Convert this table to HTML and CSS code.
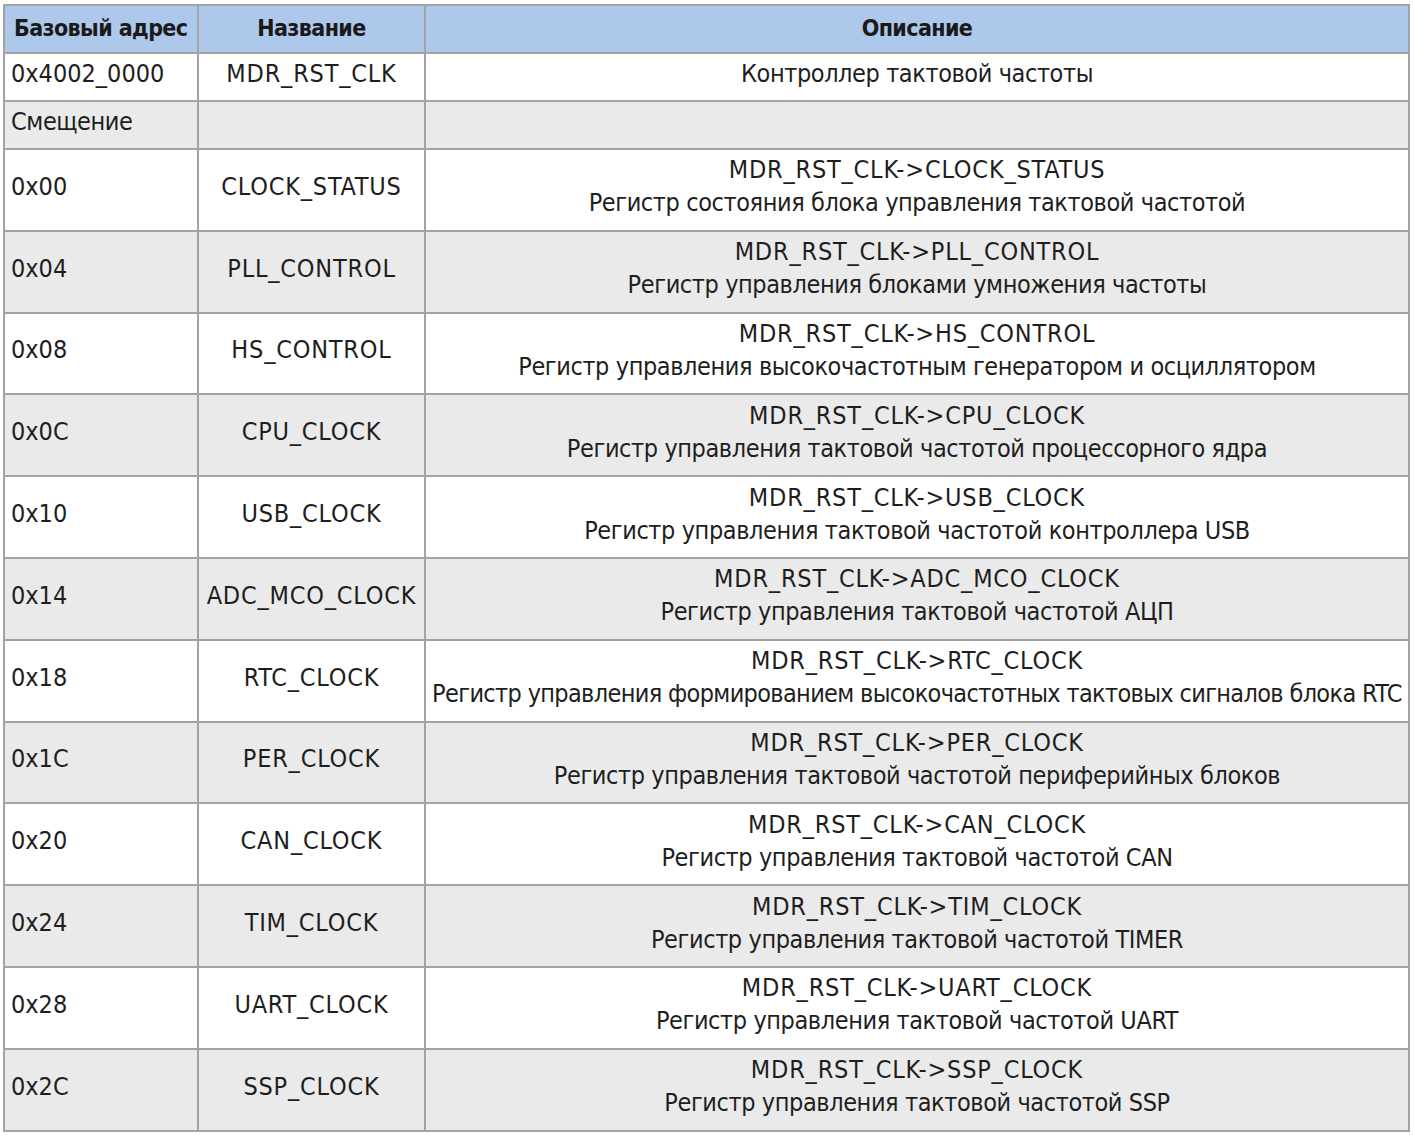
FILE: index.html
```html
<!DOCTYPE html>
<html lang="ru">
<head>
<meta charset="utf-8">
<title>MDR_RST_CLK</title>
<link rel="stylesheet" href="styles.css">
</head>
<body>
<table class="regs">
  <colgroup>
    <col class="c-addr">
    <col class="c-name">
    <col class="c-desc">
  </colgroup>
  <thead>
    <tr class="head">
      <th class="addr">Базовый адрес</th>
      <th>Название</th>
      <th>Описание</th>
    </tr>
  </thead>
  <tbody>
    <tr class="short">
      <td class="addr">0x4002_0000</td>
      <td class="code">MDR_RST_CLK</td>
      <td class="ru">Контроллер тактовой частоты</td>
    </tr>
    <tr class="short alt">
      <td class="addr ru">Смещение</td>
      <td></td>
      <td></td>
    </tr>
    <tr>
      <td class="addr">0x00</td>
      <td class="code">CLOCK_STATUS</td>
      <td><span class="code">MDR_RST_CLK-&gt;CLOCK_STATUS</span><br><span class="ru">Регистр состояния блока управления тактовой частотой</span></td>
    </tr>
    <tr class="alt">
      <td class="addr">0x04</td>
      <td class="code">PLL_CONTROL</td>
      <td><span class="code">MDR_RST_CLK-&gt;PLL_CONTROL</span><br><span class="ru">Регистр управления блоками умножения частоты</span></td>
    </tr>
    <tr>
      <td class="addr">0x08</td>
      <td class="code">HS_CONTROL</td>
      <td><span class="code">MDR_RST_CLK-&gt;HS_CONTROL</span><br><span class="ru">Регистр управления высокочастотным генератором и осциллятором</span></td>
    </tr>
    <tr class="alt">
      <td class="addr">0x0C</td>
      <td class="code">CPU_CLOCK</td>
      <td><span class="code">MDR_RST_CLK-&gt;CPU_CLOCK</span><br><span class="ru">Регистр управления тактовой частотой процессорного ядра</span></td>
    </tr>
    <tr>
      <td class="addr">0x10</td>
      <td class="code">USB_CLOCK</td>
      <td><span class="code">MDR_RST_CLK-&gt;USB_CLOCK</span><br><span class="ru">Регистр управления тактовой частотой контроллера USB</span></td>
    </tr>
    <tr class="alt">
      <td class="addr">0x14</td>
      <td class="code">ADC_MCO_CLOCK</td>
      <td><span class="code">MDR_RST_CLK-&gt;ADC_MCO_CLOCK</span><br><span class="ru">Регистр управления тактовой частотой АЦП</span></td>
    </tr>
    <tr>
      <td class="addr">0x18</td>
      <td class="code">RTC_CLOCK</td>
      <td><span class="code">MDR_RST_CLK-&gt;RTC_CLOCK</span><br><span class="ru tight">Регистр управления формированием высокочастотных тактовых сигналов блока RTC</span></td>
    </tr>
    <tr class="alt">
      <td class="addr">0x1C</td>
      <td class="code">PER_CLOCK</td>
      <td><span class="code">MDR_RST_CLK-&gt;PER_CLOCK</span><br><span class="ru">Регистр управления тактовой частотой периферийных блоков</span></td>
    </tr>
    <tr>
      <td class="addr">0x20</td>
      <td class="code">CAN_CLOCK</td>
      <td><span class="code">MDR_RST_CLK-&gt;CAN_CLOCK</span><br><span class="ru">Регистр управления тактовой частотой CAN</span></td>
    </tr>
    <tr class="alt">
      <td class="addr">0x24</td>
      <td class="code">TIM_CLOCK</td>
      <td><span class="code">MDR_RST_CLK-&gt;TIM_CLOCK</span><br><span class="ru">Регистр управления тактовой частотой TIMER</span></td>
    </tr>
    <tr>
      <td class="addr">0x28</td>
      <td class="code">UART_CLOCK</td>
      <td><span class="code">MDR_RST_CLK-&gt;UART_CLOCK</span><br><span class="ru">Регистр управления тактовой частотой UART</span></td>
    </tr>
    <tr class="alt">
      <td class="addr">0x2C</td>
      <td class="code">SSP_CLOCK</td>
      <td><span class="code">MDR_RST_CLK-&gt;SSP_CLOCK</span><br><span class="ru">Регистр управления тактовой частотой SSP</span></td>
    </tr>
  </tbody>
</table>
</body>
</html>
```

FILE: styles.css
```css
html, body {
  margin: 0;
  padding: 0;
  background: #ffffff;
}

body {
  padding: 4px 0 0 3px;
  font-family: "DejaVu Sans Condensed", "DejaVu Sans", sans-serif;
  color: #1e1e1e;
}

.regs {
  border-collapse: collapse;
  table-layout: fixed;
  width: 1405px;
}

.c-addr { width: 194px; }
.c-name { width: 227px; }
.c-desc { width: 984px; }

.regs th,
.regs td {
  border: 2px solid #a3a3a3;
  text-align: center;
  vertical-align: middle;
  padding: 0 0 7px 0;
  font-size: 25px;
  letter-spacing: 0;
  line-height: 33px;
  white-space: nowrap;
  overflow: hidden;
}

.regs tbody tr {
  height: 81.8px;
}

.regs tr.short,
.regs tr.head {
  height: 48px;
}

.regs th {
  background: #adc8eb;
  font-weight: bold;
  font-size: 23px;
  letter-spacing: -0.6px;
  color: #1a1a1a;
  padding-bottom: 2px;
}

.regs .addr {
  text-align: left;
  padding-left: 6px;
}

.regs th.addr {
  padding-left: 9px;
}

.regs .code {
  letter-spacing: 0.8px;
}

.regs .ru {
  letter-spacing: -0.4px;
}

.regs .tight {
  letter-spacing: -0.65px;
}

.regs tr.alt td {
  background: #eaeaea;
}
```
